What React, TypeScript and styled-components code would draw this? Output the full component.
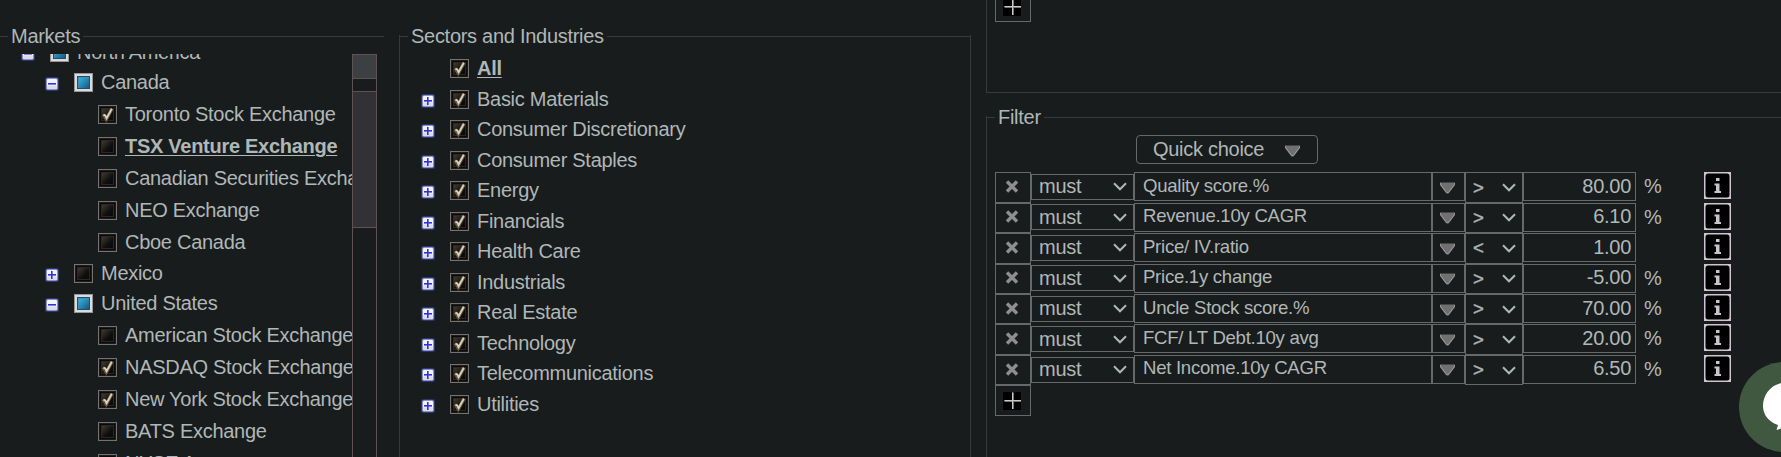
import React from "react";
import styled, { createGlobalStyle } from "styled-components";

const Global = createGlobalStyle`
  *, *::before, *::after { box-sizing: border-box; }
  html, body { margin: 0; background: #181c1d; }
  body { font-family: "Liberation Sans", Arial, sans-serif; font-size: 20px; letter-spacing: -0.28px; color: #b0b7b7; overflow: hidden; }
`;

const Page = styled.main`
  display: flex;
  height: 457px;
  width: 1781px;
  overflow: hidden;
  position: relative;
`;

const Panel = styled.section<{ $width: number; $ml?: number; $open?: boolean }>`
  flex: none;
  width: ${(p) => p.$width}px;
  height: 500px;
  margin: 25px 0 0 ${(p) => p.$ml ?? 0}px;
  border-style: solid;
  border-color: #373b36;
  border-width: 0 ${(p) => (p.$open ? "0" : "1px")} 0 ${(p) => (p.$open ? "0" : "1px")};
  border-image: ${(p) => (p.$open ? "none" : "linear-gradient(transparent 11px, #373b36 11px) 1")};
`;

const Legend = styled.h2<{ $lead: number }>`
  display: flex;
  align-items: center;
  height: 23px;
  margin: 0;
  font-size: inherit;
  font-weight: normal;
  line-height: 23px;
  white-space: nowrap;
  &::before { content: ""; width: ${(p) => p.$lead}px; height: 1px; background: #373b36; margin-right: 3px; }
  &::after { content: ""; flex: 1; height: 1px; background: #373b36; margin-left: 3px; }
`;

const MarketBody = styled.div`
  display: flex;
  width: 377px;
  height: 410px;
  margin-top: 6px;
  overflow: hidden;
`;

const MarketTree = styled.div`
  width: 352px;
  overflow: hidden;
`;

const TreeInner = styled.div`
  margin-top: -16.9px;
`;

const ScrollTrack = styled.div`
  width: 25px;
  height: 420px;
  border: 1px solid #5e5352;
`;
const ScrollButton = styled.div`
  height: 24px;
  background: #3c4043;
  border-bottom: 1px solid #5e5352;
`;
const ScrollThumb = styled.div`
  height: 137px;
  margin-top: 12px;
  background: #323236;
  border: solid #5e5352;
  border-width: 1px 0;
`;

const SectorTree = styled.div`
  padding-top: 5.5px;
`;

const Row = styled.div<{ $indent: number; $h: number }>`
  display: flex;
  align-items: center;
  height: ${(p) => p.$h}px;
  padding-left: ${(p) => p.$indent}px;
  white-space: nowrap;
`;
const ExpandSlot = styled.span`
  flex: none;
  display: flex;
  width: 29px;
  padding-top: 3px;
`;
const BoxSvg = styled.svg`
  flex: none;
  display: block;
`;
const Label = styled.span<{ $strong?: boolean }>`
  margin: -1px 0 0 8px;
  line-height: 22px;
  font-weight: ${(p) => (p.$strong ? "bold" : "normal")};
  text-decoration: ${(p) => (p.$strong ? "underline" : "none")};
  text-decoration-thickness: 1px;
  text-underline-offset: 2px;
`;

const Right = styled.div`
  flex: none;
  width: 810px;
  margin-left: 15px;
`;
const UpperPanel = styled.section`
  display: flow-root;
  height: 93px;
  padding-left: 8px;
  border: solid #373b36;
  border-width: 0 0 1px 1px;
`;
const UpperAdd = styled.div`
  margin-top: -9px;
`;
const FilterPanel = styled.section`
  margin-top: 13px;
  height: 400px;
  border-left: 1px solid #373b36;
  border-image: linear-gradient(transparent 11px, #373b36 11px) 1;
`;
const QuickChoice = styled.button`
  display: flex;
  align-items: center;
  justify-content: space-between;
  width: 182px;
  height: 29px;
  margin: 6px 0 8.3px 149px;
  padding: 0 17px 0 16px;
  border: 1px solid #686868;
  border-radius: 4px;
  background: transparent;
  color: inherit;
  font: inherit;
  letter-spacing: inherit;
`;
const FilterRow = styled.div`
  display: flex;
  align-items: flex-start;
  height: 30.45px;
  padding-left: 8px;
`;
const Cell = styled.div<{ $w: number; $h: number; $top?: number; $pad?: string; $end?: boolean; $size?: number }>`
  flex: none;
  display: flex;
  align-items: center;
  justify-content: ${(p) => (p.$end ? "flex-end" : "space-between")};
  width: ${(p) => p.$w}px;
  height: ${(p) => p.$h}px;
  margin-top: ${(p) => p.$top ?? 0}px;
  padding: ${(p) => p.$pad ?? "0"};
  border: 1px solid #686868;
  font-size: ${(p) => p.$size ?? 20}px;
  white-space: nowrap;
`;
const IconCell = styled(Cell)`
  justify-content: center;
`;
const Operator = styled.span`
  -webkit-text-stroke: 0.4px #b0b7b7;
`;
const Unit = styled.span`
  width: 60px;
  margin-left: 8px;
  line-height: 29px;
`;
const AddWrap = styled.div`
  padding-left: 8px;
`;
const TriangleSvg = styled(BoxSvg)`
  margin-top: 2px;
`;
const Chat = styled.div`
  position: absolute;
  left: 1739px;
  top: 362px;
  width: 90px;
  height: 90px;
  border-radius: 50%;
  background: #405840;
`;

type State = "on" | "off" | "part";

function CheckBox({ state }: { state: State }) {
  if (state === "part")
    return (
      <BoxSvg width="19" height="19" viewBox="0 0 19 19">
        <defs>
          <linearGradient id="blue" x1="0" y1="0" x2="1" y2="1">
            <stop offset="0" stopColor="#35b4de" />
            <stop offset="1" stopColor="#17577f" />
          </linearGradient>
        </defs>
        <rect width="19" height="19" fill="#969696" />
        <rect x="1" y="1" width="17" height="17" fill="#dddbda" />
        <rect x="3" y="3" width="13" height="13" fill="#1b4f78" />
        <rect x="4" y="4" width="11" height="11" fill="#3a94b8" />
        <rect x="5" y="5" width="10" height="10" fill="url(#blue)" />
      </BoxSvg>
    );
  return (
    <BoxSvg width="19" height="19" viewBox="0 0 19 19">
      <defs>
        <linearGradient id="dark" x1="0" y1="0" x2="1" y2="1">
          <stop offset="0" stopColor="#443d35" />
          <stop offset="0.6" stopColor="#100f0e" />
          <stop offset="1" stopColor="#080808" />
        </linearGradient>
      </defs>
      <rect x="0.5" y="0.5" width="18" height="18" fill="#1f1b19" stroke="#757272" />
      <rect x="2" y="2" width="15" height="15" fill="#0c0a09" />
      <rect x="3.5" y="3.5" width="12" height="12" fill="url(#dark)" stroke="#2b2724" />
      {state === "on" && (
        <>
          <path d="M5.2 9.3 L8.3 14.3 L14 3.6" fill="none" stroke="#66563a" strokeWidth="3.4" />
          <path d="M5.4 9.6 L7.3 10.5 L8.6 13.2 L13.8 3.8" fill="none" stroke="#d8d2c0" strokeWidth="1.8" />
        </>
      )}
    </BoxSvg>
  );
}

function Expander({ open }: { open?: boolean }) {
  return (
    <BoxSvg width="14" height="14" viewBox="0 0 14 14">
      <rect width="14" height="14" rx="2.5" fill="#2d3768" />
      <rect x="1" y="1" width="12" height="12" rx="2" fill="#8791d6" />
      <rect x="2" y="2" width="10" height="10" rx="1" fill="#f4f3f6" />
      <rect x="2" y="8.5" width="10" height="3.5" fill="#dddce6" />
      <rect x="3" y="6" width="8" height="1.6" fill="#3331dd" />
      {!open && <rect x="6" y="3" width="1.6" height="8" fill="#3331dd" />}
    </BoxSvg>
  );
}

const Chevron = () => (
  <BoxSvg width="14" height="9" viewBox="0 0 14 9">
    <path d="M1 1.3 L7 7.3 L13 1.3" fill="none" stroke="#b0b7b7" strokeWidth="2" />
  </BoxSvg>
);
const Triangle = () => (
  <TriangleSvg width="15" height="12" viewBox="0 0 15 12">
    <path d="M0 0.5 H15 V3 L9 11 Q7.5 12 6 11 L0 3 Z" fill="#707070" />
    <path d="M0.5 1 V2.5 L6.6 10.6 H8.4 L14.5 2.5 V1" fill="none" stroke="#9c9c9c" strokeWidth="1" />
  </TriangleSvg>
);
const Cross = () => (
  <BoxSvg width="16" height="15" viewBox="0 0 16 15">
    <path d="M2 1.5 L12 11.5 M12 1.5 L2 11.5" stroke="#8e8e8e" strokeWidth="3.4" />
  </BoxSvg>
);
const AddButton = () => (
  <IconCell $w={36} $h={31} $pad="0 2px 0 0">
    <BoxSvg width="18" height="18" viewBox="0 0 18 18">
      <rect width="18" height="18" fill="#000" />
      <path d="M1.5 9 H18 M10 0.5 V17" stroke="#777" strokeWidth="2" />
      <path d="M1.5 8.5 H18 M9.5 0.5 V17" stroke="#c9c9c9" strokeWidth="1" />
    </BoxSvg>
  </IconCell>
);
const Info = () => (
  <BoxSvg width="27" height="27" viewBox="0 0 27 27">
    <rect width="27" height="27" fill="#cfc5d0" />
    <rect x="1.5" y="1.5" width="24" height="24" rx="2.5" fill="#000" />
    <path d="M12 6h3.5v3h-3.500z M10.500 11.500h5v7.500h1.500v2h-6.500v-2h1.500v-5.500h-1.500z" fill="#cbc3cb" />
  </BoxSvg>
);

type Node = { name: string; level: number; state: State; strong?: boolean; open?: boolean };
const markets: Node[] = [
  { name: "North America", level: 0, state: "part", open: true },
  { name: "Canada", level: 1, state: "part", open: true },
  { name: "Toronto Stock Exchange", level: 2, state: "on" },
  { name: "TSX Venture Exchange", level: 2, state: "off", strong: true },
  { name: "Canadian Securities Exchange", level: 2, state: "off" },
  { name: "NEO Exchange", level: 2, state: "off" },
  { name: "Cboe Canada", level: 2, state: "off" },
  { name: "Mexico", level: 1, state: "off" },
  { name: "United States", level: 1, state: "part", open: true },
  { name: "American Stock Exchange", level: 2, state: "off" },
  { name: "NASDAQ Stock Exchange", level: 2, state: "on" },
  { name: "New York Stock Exchange", level: 2, state: "on" },
  { name: "BATS Exchange", level: 2, state: "off" },
  { name: "NYSE Arca", level: 2, state: "off" },
];

const sectors = [
  "All", "Basic Materials", "Consumer Discretionary", "Consumer Staples", "Energy", "Financials",
  "Health Care", "Industrials", "Real Estate", "Technology", "Telecommunications", "Utilities",
];

const filters = [
  ["Quality score.%", ">", "80.00", "%"],
  ["Revenue.10y CAGR", ">", "6.10", "%"],
  ["Price/ IV.ratio", "<", "1.00", ""],
  ["Price.1y change", ">", "-5.00", "%"],
  ["Uncle Stock score.%", ">", "70.00", "%"],
  ["FCF/ LT Debt.10y avg", ">", "20.00", "%"],
  ["Net Income.10y CAGR", ">", "6.50", "%"],
];

export default function App() {
  return (
    <Page>
      <Global />
      <Panel $width={384} $open>
        <Legend $lead={8}>Markets</Legend>
        <MarketBody>
          <MarketTree>
            <TreeInner>
              {markets.map((m) => (
                <Row key={m.name} $indent={21 + 24 * m.level} $h={m.level === 2 ? 32 : 30.5}>
                  <ExpandSlot>{m.level < 2 && <Expander open={m.open} />}</ExpandSlot>
                  <CheckBox state={m.state} />
                  <Label $strong={m.strong}>{m.name}</Label>
                </Row>
              ))}
            </TreeInner>
          </MarketTree>
          <ScrollTrack>
            <ScrollButton />
            <ScrollThumb />
          </ScrollTrack>
        </MarketBody>
      </Panel>

      <Panel $width={572} $ml={15}>
        <Legend $lead={8}>Sectors and Industries</Legend>
        <SectorTree>
          {sectors.map((s, i) => (
            <Row key={s} $indent={21} $h={30.5}>
              <ExpandSlot>{i > 0 && <Expander />}</ExpandSlot>
              <CheckBox state="on" />
              <Label $strong={i === 0}>{s}</Label>
            </Row>
          ))}
        </SectorTree>
      </Panel>

      <Right>
        <UpperPanel>
          <UpperAdd><AddButton /></UpperAdd>
        </UpperPanel>
        <FilterPanel>
          <Legend $lead={8}>Filter</Legend>
          <QuickChoice>Quick choice <Triangle /></QuickChoice>
          {filters.map(([name, op, value, unit]) => (
            <FilterRow key={name}>
              <IconCell $w={36} $h={30.45}><Cross /></IconCell>
              <Cell $w={103} $h={26} $top={1.7} $pad="0 6px 0 7px">must <Chevron /></Cell>
              <Cell $w={298} $h={29} $pad="0 8px 2px" $size={18.6}>{name}</Cell>
              <IconCell $w={33} $h={29} $pad="0 2px 0 0"><Triangle /></IconCell>
              <Cell $w={58} $h={30.45} $pad="0 6px 0 7px" $size={18.6}><Operator>{op}</Operator> <Chevron /></Cell>
              <Cell $w={113} $h={29} $pad="0 4px 1px 0" $end>{value}</Cell>
              <Unit>{unit}</Unit>
              <Info />
            </FilterRow>
          ))}
          <AddWrap><AddButton /></AddWrap>
        </FilterPanel>
      </Right>

      <Chat>
        <BoxSvg width="90" height="90" viewBox="0 0 90 90">
          <path d="M46 21 C33 21 24 32 24 44 C24 53 30 60 39 63 L37.500 68 L50 64 H66 V21 Z" fill="#fff" />
        </BoxSvg>
      </Chat>
    </Page>
  );
}
